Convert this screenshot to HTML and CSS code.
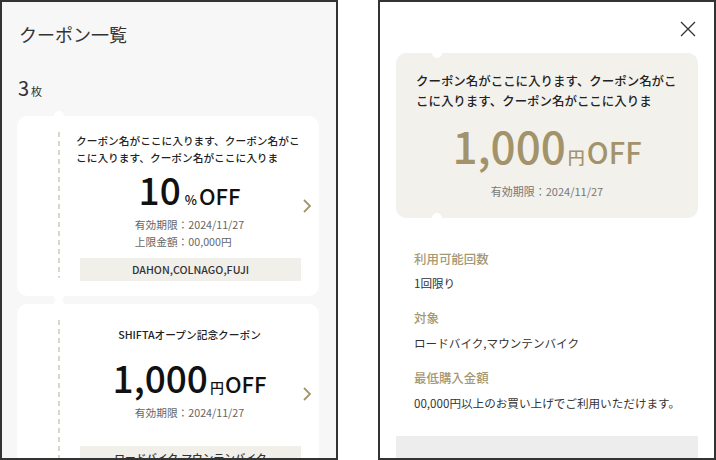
FILE: index.html
```html
<!DOCTYPE html>
<html lang="ja">
<head>
<meta charset="utf-8">
<title>クーポン一覧</title>
<link rel="stylesheet" href="styles.css">
</head>
<body>
<section class="screen list">
  <h1 class="list-title">クーポン一覧</h1>
  <p class="count"><span class="count-num">3</span><span class="count-unit">枚</span></p>
  <div class="cards">
    <article class="card">
      <div class="stub"></div>
      <div class="perf"></div>
      <div class="card-body">
        <div class="title-wrap"><span class="card-title">クーポン名がここに入ります、クーポン名がここに入ります、クーポン名がここに入りま</span></div>
        <div class="amount"><span class="num">10</span><span class="unit pct">%</span><span class="off">OFF</span></div>
        <div class="meta-wrap"><div class="meta"><div>有効期限：2024/11/27</div><div>上限金額：00,000円</div></div></div>
        <div class="tag">DAHON,COLNAGO,FUJI</div>
      </div>
      <div class="arrow"><svg width="8" height="14" viewBox="0 0 8 14"><polyline points="1,1 7,7 1,13" fill="none" stroke="#a3946a" stroke-width="1.8"/></svg></div>
    </article>
    <article class="card">
      <div class="stub"></div>
      <div class="perf"></div>
      <div class="card-body">
        <div class="title-wrap"><span class="card-title">SHIFTAオープン記念クーポン</span></div>
        <div class="amount"><span class="num">1,000</span><span class="unit yen">円</span><span class="off">OFF</span></div>
        <div class="meta-wrap"><div class="meta"><div>有効期限：2024/11/27</div><div class="blank">&nbsp;</div></div></div>
        <div class="tag">ロードバイク,マウンテンバイク</div>
      </div>
      <div class="arrow"><svg width="8" height="14" viewBox="0 0 8 14"><polyline points="1,1 7,7 1,13" fill="none" stroke="#a3946a" stroke-width="1.8"/></svg></div>
    </article>
  </div>
</section>
<section class="screen detail">
  <div class="close-row">
    <svg class="close" width="16" height="16" viewBox="0 0 16 16"><path d="M1 1L15 15M15 1L1 15" stroke="#333" stroke-width="1.3" fill="none"/></svg>
  </div>
  <div class="big-card">
    <p class="big-title">クーポン名がここに入ります、クーポン名がここに入ります、クーポン名がここに入りま</p>
    <div class="big-amount"><span class="num">1,000</span><span class="unit">円</span><span class="off">OFF</span></div>
    <p class="big-meta">有効期限：2024/11/27</p>
  </div>
  <dl class="info">
    <dt>利用可能回数</dt>
    <dd>1回限り</dd>
    <dt>対象</dt>
    <dd>ロードバイク,マウンテンバイク</dd>
    <dt>最低購入金額</dt>
    <dd>00,000円以上のお買い上げでご利用いただけます。</dd>
  </dl>
  <div class="gray-box"></div>
</section>
</body>
</html>
```
FILE: styles.css
```css
* { box-sizing: border-box; }
html, body { margin: 0; padding: 0; }
body {
  width: 716px;
  height: 460px;
  overflow: hidden;
  background: #fff;
  display: flex;
  gap: 40px;
  font-family: "Noto Sans CJK JP", "Noto Sans", sans-serif;
  color: #333;
}
.screen {
  width: 338px;
  height: 460px;
  border: 2px solid #333;
  overflow: hidden;
  flex: none;
}
/* list */
.list {
  background: #f7f7f7;
  padding: 0 17px 0 15px;
}
.list-title {
  margin: 20px 0 0 2px;
  font-size: 18px;
  line-height: 24px;
  font-weight: 400;
  color: #333;
}
.count {
  margin: 29.5px 0 0 1px;
  line-height: 24px;
  color: #333;
}
.count-num { font-size: 20px; }
.count-unit { font-size: 11px; margin-left: 2px; }
.cards {
  margin-top: 13px;
  display: flex;
  flex-direction: column;
  gap: 8px;
}
.card {
  position: relative;
  background: #fff;
  border-radius: 10px;
  display: flex;
}
.card::before, .card::after {
  content: "";
  position: absolute;
  left: 37px;
  width: 10px;
  height: 10px;
  border-radius: 50%;
  background: #fff;
}
.card::before { top: -5px; }
.card::after { bottom: -5px; }
.stub { width: 41px; flex: none; }
.perf {
  width: 2px;
  flex: none;
  margin: 16px 0 18px;
  background: repeating-linear-gradient(to bottom, #dcd6c6 0 5px, transparent 5px 9px);
}
.card-body {
  flex: 1;
  min-width: 0;
  padding: 16px 0 15px 16px;
  text-align: center;
}
.title-wrap { height: 35.6px; }
.card-title {
  display: inline-block;
  text-align: left;
  font-size: 10.7px;
  line-height: 17.8px;
  font-weight: 500;
  color: #222;
}
.amount {
  height: 44px;
  line-height: 44px;
  color: #111;
  white-space: nowrap;
}
.amount .num { font-size: 37px; font-weight: 500; }
.amount .unit { font-size: 14px; font-weight: 500; margin: 0 1px 0 2px; }
.amount .pct { font-size: 13px; margin: 0 2px 0 4px; }
.amount .off { font-size: 22px; font-weight: 500; }
.meta-wrap { margin-top: 5px; }
.meta {
  display: inline-block;
  text-align: left;
  font-size: 10.7px;
  line-height: 17px;
  color: #666;
}
.blank { visibility: hidden; }
.tag {
  margin: 6.5px 2px 0 4px;
  height: 23.3px;
  line-height: 23.3px;
  background: #f1efea;
  font-size: 10.7px;
  font-weight: 500;
  color: #333;
  white-space: nowrap;
  overflow: hidden;
}
.arrow {
  width: 16px;
  flex: none;
  display: flex;
  align-items: center;
}
/* detail */
.detail {
  background: #fff;
  padding: 0 16px;
}
.close-row {
  height: 51px;
  display: flex;
  justify-content: flex-end;
  align-items: flex-start;
  padding: 18.5px 2px 0 0;
}
.close { display: block; }
.big-card {
  position: relative;
  height: 165px;
  background: #f3f1ec;
  border-radius: 10px;
  padding: 18px 20px 0;
}
.big-card::before, .big-card::after {
  content: "";
  position: absolute;
  left: 36px;
  width: 10px;
  height: 10px;
  border-radius: 50%;
  background: #fff;
}
.big-card::before { top: -5px; }
.big-card::after { bottom: -5px; }
.big-title {
  margin: 0;
  font-size: 12.46px;
  line-height: 20.3px;
  font-weight: 500;
  color: #222;
}
.big-amount {
  margin-top: 8.3px;
  height: 50px;
  line-height: 50px;
  text-align: center;
  color: #a3936a;
  white-space: nowrap;
}
.big-amount .num { font-size: 44px; font-weight: 500; }
.big-amount .unit { font-size: 17px; font-weight: 500; margin: 0 2px 0 2px; }
.big-amount .off { font-size: 29px; font-weight: 500; }
.big-meta {
  margin: 13.6px 0 0;
  text-align: center;
  font-size: 11px;
  line-height: 17px;
  color: #777;
}
.info {
  margin: 30.7px 0 0;
  padding-left: 18px;
}
.info dt {
  font-size: 12.46px;
  line-height: 20px;
  color: #a69873;
  font-weight: 500;
}
.info dd {
  margin: 4.3px 0 15.5px;
  font-size: 11.6px;
  line-height: 20px;
  color: #333;
}
.info dd:last-child { margin-bottom: 0; }
.gray-box {
  margin-top: 23.7px;
  height: 60px;
  background: #ededed;
}
```
